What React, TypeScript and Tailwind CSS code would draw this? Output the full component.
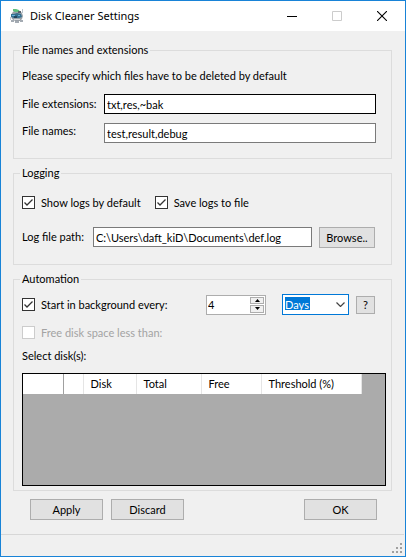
import type { InputHTMLAttributes, ReactNode } from "react";

function Group({ title, className, children }: { title: string; className: string; children: ReactNode }) {
  return (
    <fieldset className={`min-w-0 border border-[#dcdcdc] pl-2 ${className}`}>
      <legend className="-ml-0.5 h-4 px-0.5 leading-4">{title}</legend>
      {children}
    </fieldset>
  );
}

function Check({ label, ...rest }: { label: string } & InputHTMLAttributes<HTMLInputElement>) {
  return (
    <label className="flex h-[15px] items-center gap-1.5 whitespace-nowrap has-disabled:text-[#a3a3a3]">
      <span className="grid size-[13px] shrink-0">
        <input
          type="checkbox"
          className="peer col-start-1 row-start-1 size-[13px] appearance-none border border-[#333] bg-white disabled:border-[#ccc]"
          {...rest}
        />
        <svg
          viewBox="0 0 13 13"
          className="pointer-events-none col-start-1 row-start-1 hidden size-[13px] peer-checked:block"
          fill="none"
          stroke="#333"
          strokeWidth="1.3"
        >
          <path d="M2.5 6.5 5 9l5.5-5.5" />
        </svg>
      </span>
      {label}
    </label>
  );
}

function PushButton({ className, children }: { className: string; children: ReactNode }) {
  return (
    <button type="button" className={`border border-[#adadad] bg-[#e1e1e1] leading-4 ${className}`}>
      {children}
    </button>
  );
}

function AppIcon() {
  return (
    <svg viewBox="0 0 14 16" className="h-4 w-3.5" aria-hidden="true">
      <path d="M2 5 4 3h6l2 2 1 3-1 3-2 2H5l-3-2-1-3z" fill="#9aa1a8" />
      <path d="M3 1h3l3 1 1 2H5L3 3z" fill="#5fbf7c" />
      <path d="M1 6h3l3-1 4 1 1 3-3 1H4L1 9z" fill="#35708f" />
      <path d="M2 7h3v1H2zM8 7h2v1H8z" fill="#68b3d8" />
      <path d="M4 8h3v2H4z" fill="#22465f" />
      <path d="M8 3h3v2H8z" fill="#59626b" />
      <path d="M4 11h6v1H4z" fill="#d5d9dc" />
      <path d="M1 12h3v2H1zM5 13h4v2H5zM10 12h3v2h-3z" fill="#a4abb3" />
      <path d="M12 1h1v4h-1z" fill="#b9c4cc" />
      <path d="M0 9h1v3H0z" fill="#c4c9ce" />
    </svg>
  );
}

const field = "h-5 min-w-0 flex-1 border bg-white px-0.5 leading-4 outline-none";

export default function App() {
  return (
    <main className="flex min-h-screen flex-col border border-[#1883d7] bg-[#f0f0f0] font-['Lato',sans-serif] text-[11px] leading-4 text-black">
      <header className="flex h-[30px] items-center bg-white pl-[9px]">
        <AppIcon />
        <h1 className="ml-1.5 flex-1 font-['Noto_Sans',sans-serif] text-[11px]">Disk Cleaner Settings</h1>
        <button type="button" aria-label="Minimize" className="flex h-full w-[46px] items-center justify-center">
          <svg viewBox="0 0 10 10" className="size-2.5" shapeRendering="crispEdges">
            <path d="M0 5h10v1H0z" />
          </svg>
        </button>
        <button type="button" aria-label="Maximize" disabled className="flex h-full w-11 items-center justify-center">
          <svg viewBox="0 0 10 10" className="size-2.5" fill="none" stroke="#ccc">
            <path d="M.5.5h9v9h-9z" />
          </svg>
        </button>
        <button type="button" aria-label="Close" className="flex h-full w-[46px] items-center justify-center">
          <svg viewBox="0 0 10 10" className="size-2.5" fill="none" stroke="#000" strokeWidth="1.1">
            <path d="m0 0 10 10M10 0 0 10" />
          </svg>
        </button>
      </header>

      <form className="flex flex-1 flex-col gap-1.5 pt-[11px] pr-[13px] pl-3">
        <Group title="File names and extensions" className="pr-[15px] pb-[15px]">
          <p className="pt-2.5 pb-2.5">Please specify which files have to be deleted by default</p>
          <div className="flex items-center">
            <label htmlFor="ext" className="w-[82px]">File extensions:</label>
            <input id="ext" defaultValue="txt,res,~bak" className={`${field} border-black`} />
          </div>
          <div className="mt-[9px] flex items-start">
            <label htmlFor="names" className="w-[82px]">File names:</label>
            <input id="names" defaultValue="test,result,debug" className={`${field} border-[#7a7a7a]`} />
          </div>
        </Group>

        <Group title="Logging" className="pr-4 pb-4">
          <div className="flex gap-3.5 pt-3.5">
            <Check label="Show logs by default" defaultChecked />
            <Check label="Save logs to file" defaultChecked />
          </div>
          <div className="mt-[17px] flex items-start">
            <label htmlFor="path" className="w-[71px] pt-0.5">Log file path:</label>
            <input id="path" defaultValue="C:\Users\daft_kiD\Documents\def.log" className={`${field} border-[#7a7a7a]`} />
            <PushButton className="ml-[7px] h-[21px] w-14">Browse..</PushButton>
          </div>
        </Group>

        <Group title="Automation" className="pr-[5px] pb-1">
          <div className="flex items-center pt-[7px] pr-[11px]">
            <Check label="Start in background every:" defaultChecked />
            <div className="ml-auto flex h-5 w-[60px] border border-[#adadad] bg-white pr-px">
              <input
                type="number"
                aria-label="Interval"
                defaultValue={4}
                className="min-w-0 flex-1 appearance-none pl-px leading-4 outline-none [&::-webkit-inner-spin-button]:appearance-none"
              />
              <div className="flex w-3.5 flex-col gap-px py-px">
                <button type="button" aria-label="Increase" className="flex flex-1 items-center justify-center border border-[#adadad] bg-[#f0f0f0]">
                  <svg viewBox="0 0 5 3" className="h-[3px] w-[5px]"><path d="M0 3h5L2.5 0z" /></svg>
                </button>
                <button type="button" aria-label="Decrease" className="flex flex-1 items-center justify-center border border-[#adadad] bg-[#f0f0f0]">
                  <svg viewBox="0 0 5 3" className="h-[3px] w-[5px]"><path d="M0 0h5L2.5 3z" /></svg>
                </button>
              </div>
            </div>
            <div className="ml-4 grid h-[21px] w-[67px] items-center">
              <select
                aria-label="Interval unit"
                defaultValue="Days"
                className="col-start-1 row-start-1 h-[21px] appearance-none border border-[#0078d7] bg-white bg-[linear-gradient(#0078d7,#0078d7)] bg-[length:25px_13px] bg-[position:2px_2px] bg-no-repeat pl-0.5 leading-4 text-white outline-none"
              >
                <option>Days</option>
                <option>Hours</option>
              </select>
              <svg viewBox="0 0 9 5" className="pointer-events-none col-start-1 row-start-1 mr-1 h-[5px] w-[9px] justify-self-end" fill="none" stroke="#444" strokeWidth="1.2">
                <path d="m.5.5 4 4 4-4" />
              </svg>
            </div>
            <PushButton className="ml-[7px] h-[18px] w-[19px]">?</PushButton>
          </div>
          <div className="pt-2.5">
            <Check label="Free disk space less than:" disabled />
          </div>
          <p className="pt-2">Select disk(s):</p>
          <div className="mt-[9px] h-[113px] border border-black bg-[#ababab]">
            <table className="h-5 table-fixed border-collapse bg-white text-left">
              <thead>
                <tr>
                  <th className="w-10 border-r border-[#a0a0a0] p-0" />
                  <th className="w-5 border-r border-[#e5e5e5] p-0" />
                  <th className="w-[53px] border-r border-[#e5e5e5] p-0 pl-[7px] font-normal">Disk</th>
                  <th className="w-[65px] border-r border-[#e5e5e5] p-0 pl-[7px] font-normal">Total</th>
                  <th className="w-[60px] border-r border-[#e5e5e5] p-0 pl-[7px] font-normal">Free</th>
                  <th className="w-[100px] border-r border-[#e5e5e5] p-0 pl-[7px] font-normal">Threshold (%)</th>
                </tr>
              </thead>
            </table>
          </div>
        </Group>

        <div className="flex gap-2 pt-0.5 pr-[15px] pl-[17px]">
          <PushButton className="h-[21px] w-[73px]">Apply</PushButton>
          <PushButton className="h-[21px] w-[73px]">Discard</PushButton>
          <PushButton className="ml-auto h-[21px] w-[73px]">OK</PushButton>
        </div>
      </form>

      <footer className="mr-px flex h-[22px] items-end justify-end border-t border-[#d7d7d7] pr-0.5 pb-[3px]">
        <svg viewBox="0 0 10 10" className="size-2.5" fill="#a0a0a0" shapeRendering="crispEdges">
          <path d="M8 0h2v2H8zM4 4h2v2H4zM8 4h2v2H8zM0 8h2v2H0zM4 8h2v2H4zM8 8h2v2H8z" />
        </svg>
      </footer>
    </main>
  );
}
